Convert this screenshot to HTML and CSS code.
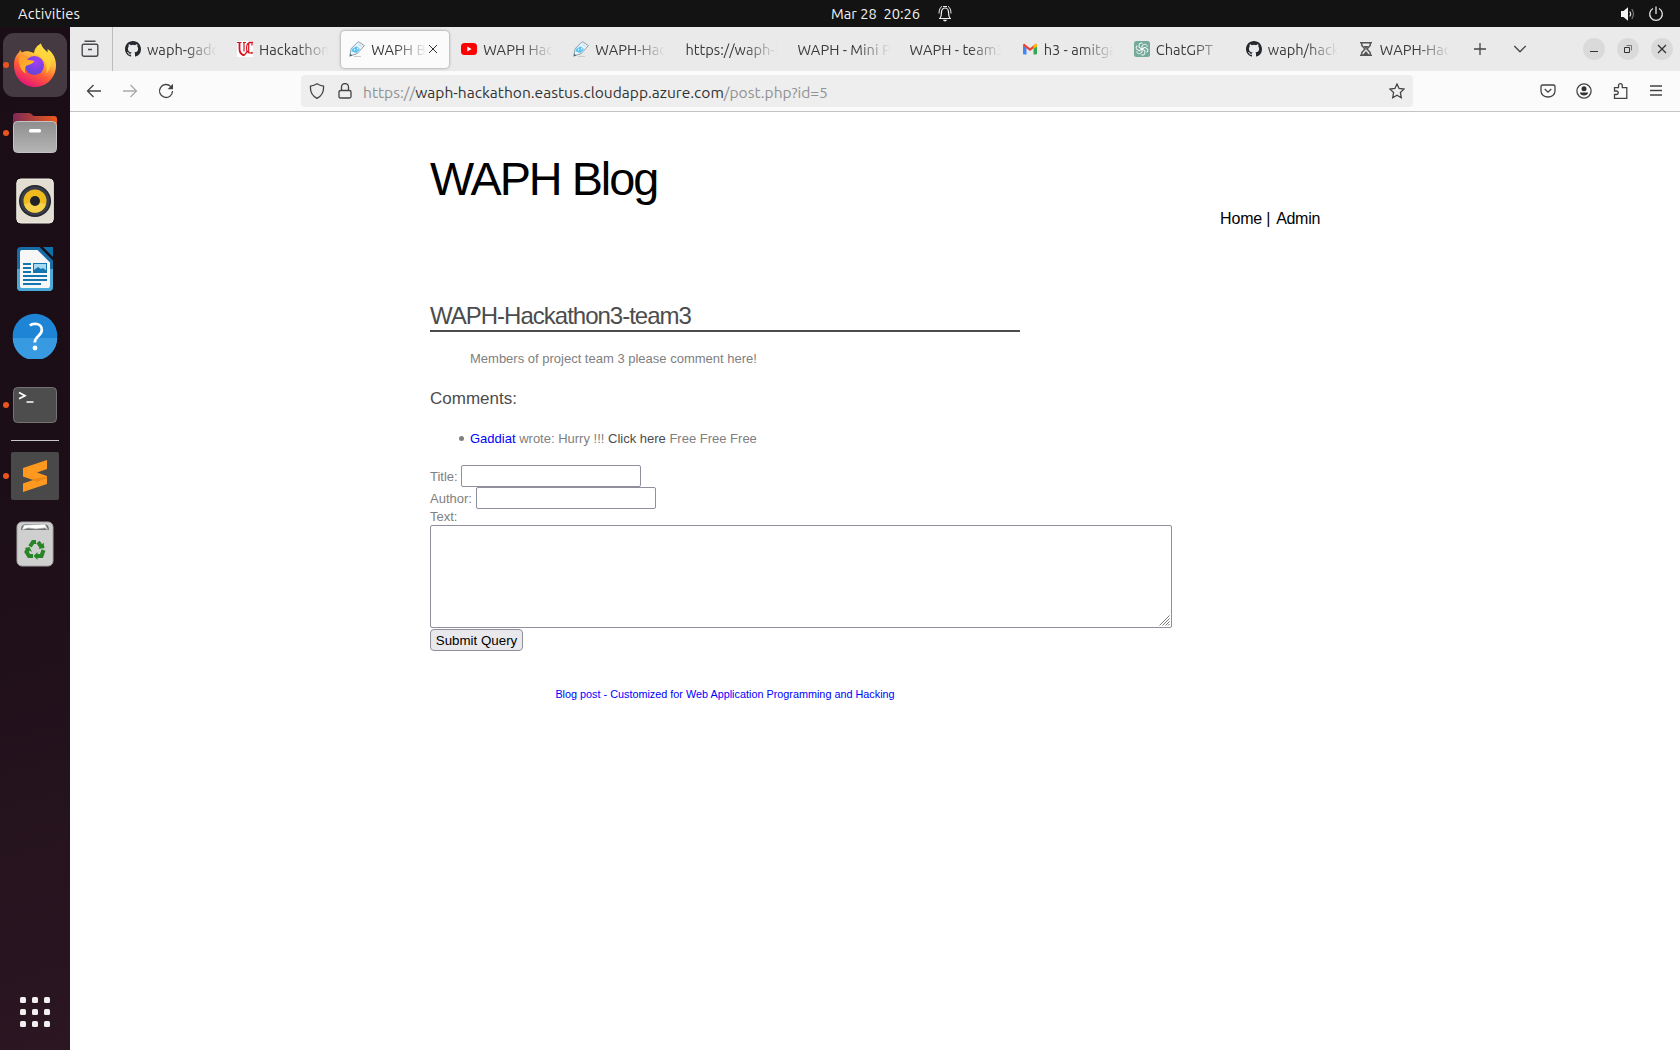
FILE: index.html
```html
<!DOCTYPE html>
<html lang="en">
<head>
<meta charset="utf-8">
<title>WAPH Blog</title>
<link rel="stylesheet" href="styles.css">
</head>
<body>
<svg class="defs" width="0" height="0">
  <symbol id="github" viewBox="0 0 16 16"><path fill="#24292f" d="M8 0C3.58 0 0 3.58 0 8c0 3.54 2.29 6.53 5.47 7.59.4.07.55-.17.55-.38 0-.19-.01-.82-.01-1.49-2.01.37-2.53-.49-2.69-.94-.09-.23-.48-.94-.82-1.13-.28-.15-.68-.52-.01-.53.63-.01 1.08.58 1.23.82.72 1.21 1.87.87 2.33.66.07-.52.28-.87.51-1.07-1.78-.2-3.64-.89-3.64-3.95 0-.87.31-1.59.82-2.15-.08-.2-.36-1.02.08-2.12 0 0 .67-.21 2.2.82a7.6 7.6 0 0 1 4 0c1.53-1.04 2.2-.82 2.2-.82.44 1.1.16 1.92.08 2.12.51.56.82 1.27.82 2.15 0 3.07-1.87 3.75-3.65 3.95.29.25.54.73.54 1.48 0 1.07-.01 1.93-.01 2.2 0 .21.15.46.55.38A8 8 0 0 0 16 8c0-4.42-3.58-8-8-8z"/></symbol>
  <symbol id="pencil" viewBox="0 0 16 16"><path fill="#eef5fa" stroke="#8195a3" stroke-width=".9" d="M9.300.6 15.400 4.600 8 12.800 1 14.800 2 7.800z"/><path fill="#5cc4f2" d="M3.200 7.800 7.500 5.200 11 8 7.500 12C6 11.600 3.500 11 2.600 10.200z"/><path fill="none" stroke="#a5dcf5" d="m9.500 3.200 3 2.300"/><path fill="#fff" d="M5 8h1.200v1.200H5zM8 7h1.200v1.200H8z"/><path fill="#536b7c" d="m.5 15.500.7-3 2.200 2.200z"/><path stroke="#c6ccd1" d="M5 15.500h7"/></symbol>
</svg>

<header class="topbar">
  <span class="activities">Activities</span>
  <div class="clock"><span class="clock-text">Mar 28&nbsp; 20:26</span>
    <svg width="14" height="17" viewBox="0 0 14 17" fill="none" stroke="#eee" stroke-width="1.200"><path d="M1 13.500h12M2 13.300C3.500 11.500 3.500 10 3.500 7a3.500 4 0 0 1 7 0c0 3 0 4.500 1.500 6.300"/><path stroke-width="1" d="M1 8.500C1 5 2 2.500 4 1.300M13 8.500C13 5 12 2.500 10 1.300M5 1.500h4"/><path fill="#eee" stroke="none" d="M5 14.800h4c-.5 2.300-3.500 2.300-4 0z"/></svg>
  </div>
  <div class="status">
    <svg width="16" height="16" viewBox="0 0 16 16" fill="none"><path fill="#f2f2f2" d="M1 5h2.500L8 1.200v13.600L3.500 11H1z"/><path stroke="#ddd" stroke-width="1.200" d="M9.800 5.500q1.800 2.500 0 5"/><path stroke="#777" stroke-width="1.200" d="M11.800 3.200q3.400 4.800 0 9.600"/></svg>
    <svg width="16" height="16" viewBox="0 0 16 16" fill="none" stroke="#e6e6e6" stroke-width="1.300"><path d="M5 2.500a6.300 6.300 0 1 0 6 0M8 .5V8"/></svg>
  </div>
</header>

<div class="desktop">
  <nav class="dock">
    <div class="app running focused">
      <svg width="44" height="44" viewBox="0 0 44 44">
        <defs>
          <linearGradient id="ff1" x1=".8" y1="0" x2=".3" y2="1"><stop offset="0" stop-color="#fff14a"/><stop offset=".35" stop-color="#ffbd3a"/><stop offset=".65" stop-color="#ff5b36"/><stop offset="1" stop-color="#e5107e"/></linearGradient>
          <radialGradient id="ff2" cx=".6" cy=".3" r=".8"><stop offset="0" stop-color="#a33ff0"/><stop offset="1" stop-color="#5a45d8"/></radialGradient>
          <linearGradient id="ff3" x1="0" y1="0" x2="1" y2="1"><stop offset="0" stop-color="#ff9a28"/><stop offset="1" stop-color="#ffbf30"/></linearGradient>
        </defs>
        <path fill="url(#ff1)" d="M28 .5c.5 4 4 6 6.500 9 .2-1.500.1-2.500 0-3.500 6 4 8.500 10 8.500 16.500C43 34.500 33.500 44 22 44S1 34.500 1 22.500C1 16 3 12 6 9.500L7 7l2 2.500C12 8 15 7.500 21 10 21.500 5 25 2 28 .5z"/>
        <circle cx="21.500" cy="22.500" r="9.500" fill="url(#ff2)"/>
        <path fill="url(#ff3)" d="M6 14.500C9 11.500 12 14 14 16.500c2.500.8 5 .8 7.500 1.500-2 3.500-6 3.500-8.500 5-1 2-1.500 4.500-.5 7.500C7 27 5 20 6 14.500z"/>
        <path fill="#ffd83c" opacity=".75" d="M22 10.500C22 6 25 3 28 .5c.5 4 4 6 6.500 9C40 16 39 25 33 31c2-8 0-16-11-20.500z"/>
      </svg>
    </div>
    <div class="app running">
      <svg width="46" height="44" viewBox="0 0 46 44"><defs><linearGradient id="fa"><stop offset="0" stop-color="#7c2a55"/><stop offset="1" stop-color="#ee5a1c"/></linearGradient><linearGradient id="fb" x2="0" y2="1"><stop offset="0" stop-color="#8e8e8e"/><stop offset="1" stop-color="#b5b5b5"/></linearGradient></defs><path fill="url(#fa)" d="M4 2h13q2 0 3 1.500T23 5h19q3 0 3 3v12H1V5q0-3 3-3z"/><rect x="1.500" y="10.500" width="43" height="31" rx="4" fill="url(#fb)" stroke="#c2c2c2"/><rect x="17" y="18" width="12" height="3.400" rx="1.500" fill="#fff"/></svg>
    </div>
    <div class="app">
      <svg width="38" height="46" viewBox="0 0 38 46"><rect x=".8" y="1" width="36.500" height="44" rx="4" fill="#e2ded2" stroke="#f0eee6"/><circle cx="19" cy="23" r="16" fill="#24252f"/><circle cx="19" cy="23" r="14.500" fill="#383d48"/><circle cx="19" cy="23" r="11.500" fill="#efba1d"/><path fill="#f6d14b" d="M19 23 8 26.500a11.500 11.500 0 0 0 22 0z"/><circle cx="19" cy="23" r="5" fill="#222326"/></svg>
    </div>
    <div class="app">
      <svg width="38" height="46" viewBox="0 0 38 46"><path fill="#176ca5" d="M5 1h18.500L37 14.500V41q0 4-4 4H5q-4 0-4-4V5q0-4 4-4z"/><path fill="#4aa9d8" d="M1 23h36v18q0 4-4 4H5q-4 0-4-4z"/><path fill="#f7f7f7" d="M6 4h15.500L34 16.500V40q0 2-2 2H6q-2 0-2-2V6q0-2 2-2z"/><path fill="#0f72aa" d="M27 1h10v10z"/><path stroke="#1476b0" stroke-width="2" d="M7 18h8M7 22h8M7 26h8M7 30h24M7 34h24M7 38h18"/><rect x="17.500" y="17.500" width="13" height="9" fill="#a6d9f3" stroke="#1476b0"/><path fill="#1476b0" d="M18 27v-3l4-3 3 2 2-1 4 3v2z"/></svg>
    </div>
    <div class="app help">
      <svg width="46" height="46" viewBox="0 0 46 46"><circle cx="23" cy="23" r="22.300" fill="#1d84d6"/><path fill="#389be2" d="M.7 25h44.600a22.300 22.300 0 0 1-44.600 0z"/><path fill="none" stroke="#fff" stroke-width="2.700" d="M17.800 12.500c3-2.600 12-2.800 12 4.500 0 6-7 6-7 12.500"/><circle cx="23" cy="35" r="2.400" fill="#fff"/></svg>
    </div>
    <div class="app running">
      <svg width="46" height="38" viewBox="0 0 46 38"><rect x="1.500" y="1.500" width="43" height="35" rx="4" fill="#4d4d4d" stroke="#747474"/><path fill="none" stroke="#fff" stroke-width="1.700" d="m7 6.500 6 3.200-6 3M14.500 16h7"/></svg>
    </div>
    <hr class="dock-line">
    <div class="app running">
      <svg width="48" height="48" viewBox="0 0 48 48"><rect width="48" height="48" rx="2" fill="#494949"/><path fill="#ff981f" d="M36 8v9l-10 3.500 10 3.500v8L12 40v-8.500l10-3.500-10-3.500V16z"/><path fill="#d97b10" d="m20 27.500 16-3v1.500L26 30z" opacity=".55"/></svg>
    </div>
    <div class="app">
      <svg width="38" height="46" viewBox="0 0 38 46"><rect x="1" y="1" width="36" height="44" rx="5" fill="#cfcfcf" stroke="#a5a5a5"/><path fill="#707070" d="M5 9q0-6 5-6h18q5 0 5 6z"/><path fill="#fff" stroke="#aaa" stroke-width=".7" d="M6 9 8 4l21-1 3 6-3-2-9 1-8-1z"/><g fill="none" stroke="#278526" stroke-width="4"><path d="m14 25.500 3-4.500h3M22 21l3.500 5M27.500 29l-2 6H21M17 35h-4l-2.500-4 1.500-3"/></g><path fill="#278526" d="m22.500 28 6-1-1-5.500zM21.500 31v8l-4-4zM8.500 27l5-1 2.500 5z"/></svg>
    </div>
    <div class="show-apps"><i></i><i></i><i></i><i></i><i></i><i></i><i></i><i></i><i></i></div>
  </nav>

  <div class="browser">
    <div class="tabbar">
      <div class="view">
        <svg width="18" height="18" viewBox="0 0 18 18" fill="none" stroke="#4a4a4f" stroke-width="1.400"><path d="M3.500 1.200h11M2.500 4.200h13q1.300 0 1.300 1.300v9q0 1.800-1.800 1.800H3q-1.800 0-1.800-1.800v-9q0-1.300 1.300-1.300zM7 9.500h4"/></svg>
      </div>
      <div class="tabs">
        <div class="tab"><svg class="fav"><use href="#github"/></svg><span class="label">waph-gadd</span></div>
        <div class="tab"><svg class="fav" viewBox="0 0 16 16" fill="none"><path fill="#fff" d="M0 0h16v16H0z"/><path stroke="#d6131f" stroke-width="1.800" d="M2.500 1.500V8c0 3.500 1.500 5.500 5 6.500"/><path stroke="#d6131f" stroke-width="1.200" d="M0 1.500h4.500M6 1.500h3M7 1.500v9M15 4.500V2C11.500.5 9.500 3 9.500 7s2 6 5.500 4.500V13M11.700 2v9.500M12 1.300h4M5 13.500c2 1.500 4-.5 4.700-3"/></svg><span class="label">Hackathon</span></div>
        <div class="tab active"><svg class="fav"><use href="#pencil"/></svg><span class="label">WAPH B</span><svg class="close" viewBox="0 0 10 10" stroke="#333"><path d="m1 1 8 8M9 1 1 9"/></svg></div>
        <div class="tab"><svg class="fav" viewBox="0 0 16 16"><rect y="2" width="16" height="12" rx="3.500" fill="#f00"/><path fill="#fff" d="M6.300 5.500v5L10.600 8z"/></svg><span class="label">WAPH Hac</span></div>
        <div class="tab"><svg class="fav"><use href="#pencil"/></svg><span class="label">WAPH-Hac</span></div>
        <div class="tab"><span class="label">https://waph-h</span></div>
        <div class="tab"><span class="label">WAPH - Mini P</span></div>
        <div class="tab"><span class="label">WAPH - team3</span></div>
        <div class="tab"><svg class="fav" viewBox="0 0 16 16"><path fill="#4285f4" d="M1 4.500 4.500 7v6.500H2q-1 0-1-1z"/><path fill="#34a853" d="M15 4.500 11.500 7v6.500H14q1 0 1-1z"/><path fill="#ea4335" d="m1 4 1-1.500 6 4.700 6-4.700L15 4.500 8 10 1 4.800z"/><path fill="#fbbc04" d="m11.500 4.500 2-1.700q1.500-.5 1.500 1.500v1.200L11.500 8z"/></svg><span class="label">h3 - amitga</span></div>
        <div class="tab"><svg class="fav" viewBox="0 0 16 16" fill="none"><rect width="16" height="16" rx="2.500" fill="#74aa9c"/><g stroke="#fff" stroke-width=".9"><path id="petal" d="M8 8V4.700L10.200 3.400c1.600-.6 3.200.7 2.900 2.300"/><use href="#petal" transform="rotate(60 8 8)"/><use href="#petal" transform="rotate(120 8 8)"/><use href="#petal" transform="rotate(180 8 8)"/><use href="#petal" transform="rotate(240 8 8)"/><use href="#petal" transform="rotate(300 8 8)"/></g></svg><span class="label">ChatGPT</span></div>
        <div class="tab"><svg class="fav"><use href="#github"/></svg><span class="label">waph/hack</span></div>
        <div class="tab"><svg class="fav" viewBox="0 0 16 16" fill="none" stroke="#555" stroke-width="1.500"><path d="M2 1.800h12M2 14.200h12M3.800 2v2.500L7 8l-3.200 3.500V14M12.200 2v2.500L9 8l3.200 3.500V14"/><path fill="#555" stroke="none" d="M5.500 5h5L8 8zM4.800 14 8 10l3.200 4z"/></svg><span class="label">WAPH-Hac</span></div>
      </div>
      <svg class="plus" width="14" height="14" viewBox="0 0 14 14" stroke="#444" stroke-width="1.300"><path d="M7 1v12M1 7h12"/></svg>
      <svg class="chev" width="14" height="10" viewBox="0 0 14 10" fill="none" stroke="#444" stroke-width="1.300"><path d="m1.300 2 5.700 5.800L12.700 2"/></svg>
      <div class="window-buttons">
        <svg viewBox="0 0 22 22"><circle cx="11" cy="11" r="11" fill="#dadada"/><path stroke="#333" d="M7 13.500h8"/></svg>
        <svg viewBox="0 0 22 22" fill="none"><circle cx="11" cy="11" r="11" fill="#dadada"/><path stroke="#333" d="M7.500 9.500h5v5h-5z"/><path stroke="#777" d="M9.500 7.500h5v5"/></svg>
        <svg viewBox="0 0 22 22"><circle cx="11" cy="11" r="11" fill="#dadada"/><path stroke="#333" stroke-width="1.300" d="m7 7 8 8M15 7l-8 8"/></svg>
      </div>
    </div>

    <div class="toolbar">
      <div class="nav-buttons">
        <svg viewBox="0 0 16 16"><path d="M15 8H1.500M7.500 2l-6 6 6 6"/></svg>
        <svg viewBox="0 0 16 16" class="dim"><path d="M1 8h13.500M8.500 2l6 6-6 6"/></svg>
        <svg viewBox="0 0 16 16"><path d="M12.800 3.600A6.500 6.500 0 1 0 14.500 8"/><path fill="#444" stroke="none" d="M15 .8v5.400H9.600z"/></svg>
      </div>
      <div class="urlbar">
        <svg class="ui" viewBox="0 0 16 16"><path d="M8 .8c2 1.200 4 1.900 6.500 2.300.5 5.400-1 9.400-6.500 12.200C2.500 12.500 1 8.500 1.500 3.100 4 2.700 6 2 8 .8z"/></svg>
        <svg class="ui lock" viewBox="0 0 16 16"><path d="M3.500 7.500h9q1.500 0 1.500 1.500v4.500q0 1.500-1.500 1.500h-9Q2 15 2 13.500V9q0-1.500 1.500-1.500zM4.500 7.300V4a3.500 3.500 0 0 1 7 0v3.300"/></svg>
        <span class="url">https://<b>waph-hackathon.eastus.cloudapp.azure.com</b>/post.php?id=5</span>
        <svg class="ui star" viewBox="0 0 16 16"><path d="m8 1 2.100 4.500 4.900.6-3.600 3.400.9 5.200L8 12.300l-4.300 2.400.9-5.200L1 6.100l4.900-.6z"/></svg>
      </div>
      <div class="actions">
        <svg viewBox="0 0 16 16"><path d="M2.500 2h11q1.500 0 1.500 1.500V8c0 8-14 8-14 0V3.500Q1 2 2.500 2zM4.700 6 8 9.200 11.300 6"/></svg>
        <svg viewBox="0 0 16 16"><circle cx="8" cy="8" r="7.100"/><circle cx="8" cy="5.800" r="2.500" fill="#333" stroke="none"/><path fill="#333" stroke="none" d="M3.800 9.500h8.400c-.4 4-8 4-8.400 0z"/></svg>
        <svg viewBox="0 0 16 16"><path d="M2.500 15.300V11.500h2a1.700 1.700 0 0 0 0-3.500h-2V4.700h4V2.600a1.900 1.900 0 0 1 3.800 0v2.100h4.500v10.600z"/></svg>
        <svg viewBox="0 0 16 16"><path d="M2 3h12M2 7.500h12M2 12h12"/></svg>
      </div>
    </div>

    <main class="page">
      <h1>WAPH Blog</h1>
      <div class="menu"><a class="home">Home</a> | <a class="admin">Admin</a></div>
      <h2>WAPH-Hackathon3-team3</h2>
      <p class="body-text">Members of project team 3 please comment here!</p>
      <h3>Comments:</h3>
      <ul class="comments"><li><a class="author">Gaddiat</a> wrote: Hurry !!! <a class="click">Click here</a> Free Free Free</li></ul>
      <form>
        <label class="field title-field"><span>Title:</span><input type="text"></label>
        <label class="field"><span>Author:</span><input type="text"></label>
        <label class="text-label">Text:</label>
        <div class="area"><textarea></textarea><svg class="grip" width="11" height="11" viewBox="0 0 11 11" stroke="#777"><path d="M.5 10.500l10-10M3.500 10.500l7-7M6.500 10.500l4-4M9 10.500l1.500-1.500"/></svg></div>
        <button type="button">Submit Query</button>
      </form>
      <footer>Blog post - Customized for Web Application Programming and Hacking</footer>
    </main>
  </div>
</div>
</body>
</html>
```
FILE: styles.css
```css
* { box-sizing: border-box; }
body {
  margin: 0;
  width: 1680px;
  height: 1050px;
  overflow: hidden;
  display: flex;
  flex-direction: column;
  font: 15px/20px Ubuntu, "Noto Sans", sans-serif;
  background: #fff;
}
svg { display: block; flex: none; }
.defs { position: absolute; }

.topbar {
  height: 27px;
  flex: none;
  background: #131313;
  color: #f2f2f2;
  font-size: 14.667px;
  display: flex;
  align-items: center;
  padding: 0 16px 0 18px;
}
.activities { width: 813px; letter-spacing: .2px; }
.clock { display: flex; align-items: center; gap: 18px; }
.clock-text { white-space: nowrap; }
.status { display: flex; gap: 12px; margin-left: auto; }

.desktop { flex: 1; display: flex; min-height: 0; }
.dock {
  width: 70px;
  flex: none;
  padding-top: 6px;
  background: linear-gradient(165deg, #1b0d16 0%, #1c0e17 45%, #2b1622 100%);
  display: flex;
  flex-direction: column;
  align-items: center;
  gap: 4px;
}
.app {
  position: relative;
  width: 64px;
  height: 64px;
  border-radius: 11px;
  display: flex;
  align-items: center;
  justify-content: center;
}
.app.focused { background: #463a42; }
.app.help { padding-bottom: 2px; }
.app.running::before {
  content: "";
  position: absolute;
  left: 0;
  top: 29px;
  width: 6px;
  height: 6px;
  border-radius: 50%;
  background: #e95420;
}
.dock-line { width: 48px; height: 1px; margin: -1px 0; border: 0; background: #c9c4c7; }
.show-apps {
  display: grid;
  grid-template-columns: repeat(3, 6px);
  gap: 6px;
  margin-top: auto;
  margin-bottom: 23px;
}
.show-apps i { height: 6px; border-radius: 1.500px; background: #f1eff0; }

.browser { flex: 1; min-width: 0; display: flex; flex-direction: column; }
.tabbar { height: 44px; flex: none; background: #eaeaea; display: flex; align-items: center; }
.view { width: 43px; height: 44px; padding: 13px 0 0 11px; border-right: 1px solid #bdbdbd; }
.tabs { display: flex; gap: 4px; padding-left: 4px; width: 1348px; }
.tab {
  width: 108.080px;
  height: 37px;
  padding: 0 8px;
  border-radius: 4px;
  display: flex;
  align-items: center;
  gap: 6px;
  color: #3a3a3d;
}
.tab.active { background: #fbfbfb; box-shadow: 0 0 3px rgba(0, 0, 0, .45); }
.fav { width: 16px; height: 16px; }
.label {
  flex: 1;
  min-width: 0;
  overflow: hidden;
  white-space: nowrap;
  font-size: 14.667px;
  padding-top: 2px;
  mask-image: linear-gradient(to left, transparent, #000 32px);
}
.close { width: 10px; height: 10px; margin-left: -5px; margin-right: 3px; }
.plus { margin-left: 11.500px; }
.chev { margin-left: 26px; }
.window-buttons { display: flex; gap: 12px; margin-left: auto; padding-right: 7px; }
.window-buttons svg { width: 22px; height: 22px; }

.toolbar {
  height: 41px;
  flex: none;
  background: #fbfbfb;
  border-bottom: 1px solid #c4c4c7;
  display: flex;
  align-items: center;
}
.nav-buttons { display: flex; gap: 20px; padding-left: 16px; width: 231px; }
.nav-buttons svg, .actions svg, .ui { width: 16px; height: 16px; fill: none; stroke: #444; stroke-width: 1.300; }
.nav-buttons .dim { stroke: #aaa; }
.urlbar {
  width: 1112px;
  height: 32px;
  border-radius: 4px;
  background: #eee;
  display: flex;
  align-items: center;
  padding: 0 8px;
}
.lock { margin-left: 12px; }
.url { margin-left: 10px; color: #929292; white-space: nowrap; font-size: 15.570px; padding-top: 1px; }
.url b { font-weight: normal; color: #333; }
.star { margin-left: auto; }
.actions { display: flex; gap: 20px; margin-left: auto; padding-right: 16px; }

.page {
  flex: 1;
  padding: 39px 0 0 360px;
  font: 13px/18px "Liberation Sans", Arial, sans-serif;
  color: #808080;
}
h1, h2, h3, p { margin: 0; font-weight: normal; }
h1 { font-size: 46.800px; line-height: 56px; letter-spacing: -2px; color: #000; }
.menu {
  width: 890px;
  text-align: right;
  font-size: 16px;
  line-height: 22px;
  margin-top: 1px;
  color: #000;
  letter-spacing: -.3px;
}
.home { letter-spacing: -.2px; }
.admin { margin-left: 2px; }
h2 {
  width: 590px;
  height: 32px;
  margin-top: 70px;
  border-bottom: 2px solid #4c4c4c;
  font-size: 24px;
  line-height: 32px;
  letter-spacing: -1px;
  color: #4c4c4c;
}
.body-text { margin: 18px 0 0 40px; }
h3 { font-size: 17px; line-height: 22px; margin-top: 20px; color: #4c4c4c; }
.comments { margin: 20px 0 17px; padding-left: 40px; list-style: none; }
.comments li::before {
  content: "";
  display: inline-block;
  width: 5px;
  height: 5px;
  margin: 0 6px 2px -11px;
  border-radius: 50%;
  background: #808080;
}
.author { color: #00f; }
.click { color: #4c4c4c; }
.field { display: flex; align-items: center; gap: 4px; height: 22px; }
.field span { padding-top: 2px; }
.title-field { gap: 3px; }
input, textarea { border: 1px solid #8f8f9d; border-radius: 2px; background: #fff; padding: 0; margin: 0; }
input { width: 180px; height: 22px; }
.text-label { display: block; height: 16px; line-height: 15px; }
.area { position: relative; width: 742px; height: 103px; }
textarea { display: block; width: 742px; height: 103px; resize: none; }
.grip { position: absolute; right: 2px; bottom: 2px; }
button {
  display: block;
  width: 93px;
  height: 22px;
  margin-top: 1px;
  padding: 0;
  border: 1px solid #8f8f9d;
  border-radius: 4px;
  background: #e9e9ed;
  color: #000;
  font: 13.333px "Liberation Sans", Arial, sans-serif;
}
footer { width: 590px; margin-top: 34px; text-align: center; font-size: 10.830px; color: #00f; }
```
